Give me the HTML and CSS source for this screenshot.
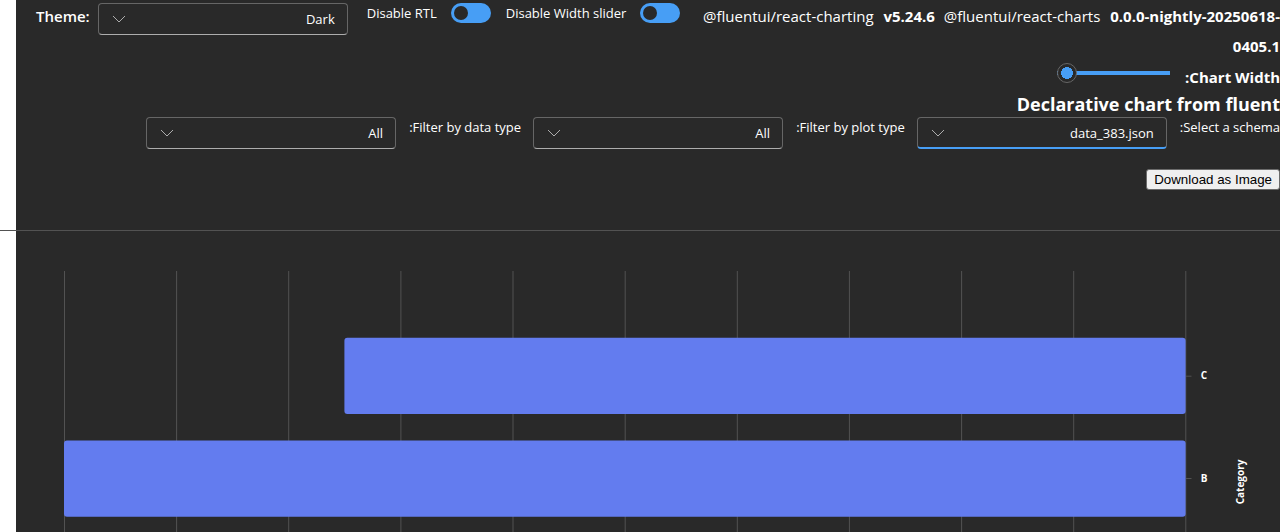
FILE: index.html
```html
<!DOCTYPE html>
<html lang="en" dir="rtl">
<head>
<meta charset="utf-8">
<title>Declarative chart</title>
<link rel="stylesheet" href="styles.css">
</head>
<body>
<main class="app">
  <header class="toolbar" dir="ltr">
    <div class="theme">
      <label class="strong" for="theme">Theme:</label>
      <div class="dropdown">
        <select id="theme" dir="rtl"><option>Dark</option></select>
        <svg class="chevron" viewBox="0 0 14 8"><path d="M1 1l6 6 6-6"/></svg>
      </div>
    </div>
    <div class="switch"><label for="rtl">Disable RTL</label><input id="rtl" type="checkbox" role="switch" checked></div>
    <div class="switch"><label for="slider">Disable Width slider</label><input id="slider" type="checkbox" role="switch" checked></div>
    <p class="versions"><span>@fluentui/react-charting</span> <b>v5.24.6</b> <span>@fluentui/react-charts</span> <b>0.0.0-nightly-20250618-0405.1</b></p>
  </header>
  <div class="width-row">
    <label class="strong" for="width">Chart Width:</label>
    <input id="width" class="range" type="range" min="0" max="100" value="100">
  </div>
  <h1 class="title">Declarative chart from fluent</h1>
  <div class="filters">
    <div class="field">
      <label for="schema">Select a schema:</label>
      <div class="dropdown active">
        <select id="schema"><option>data_383.json</option></select>
        <svg class="chevron" viewBox="0 0 14 8"><path d="M1 1l6 6 6-6"/></svg>
      </div>
    </div>
    <div class="field">
      <label for="plot">Filter by plot type:</label>
      <div class="dropdown">
        <select id="plot"><option>All</option></select>
        <svg class="chevron" viewBox="0 0 14 8"><path d="M1 1l6 6 6-6"/></svg>
      </div>
    </div>
    <div class="field">
      <label for="data">Filter by data type:</label>
      <div class="dropdown">
        <select id="data"><option>All</option></select>
        <svg class="chevron" viewBox="0 0 14 8"><path d="M1 1l6 6 6-6"/></svg>
      </div>
    </div>
  </div>
  <button class="download" type="button">Download as Image</button>
  <hr class="divider">
  <svg class="chart" viewBox="0 0 1264 301" direction="ltr" role="img" aria-label="Bar chart by category">
    <path class="grid" d="M48.5 40V301M160.6 40V301M272.7 40V301M384.9 40V301M497 40V301M609.2 40V301M721.3 40V301M833.4 40V301M945.6 40V301M1057.7 40V301M1169.8 40V301M1170 145.2h5.500M1170 247.500h5.500"/>
    <rect class="bar" x="328.400" y="106.800" width="841.200" height="76.200" rx="3"/>
    <rect class="bar" x="48" y="209.500" width="1121.600" height="76.200" rx="3"/>
    <text class="tick" x="1188" y="148" text-anchor="middle">C</text>
    <text class="tick" x="1188" y="251" text-anchor="middle">B</text>
    <text class="axis-title" transform="translate(1228 251) rotate(-90)" text-anchor="middle">Category</text>
  </svg>
</main>
</body>
</html>
```
FILE: styles.css
```css
* { box-sizing: border-box; }
body {
  margin: 0;
  background: #fff;
  font-family: "Open Sans", "Noto Sans", sans-serif;
  font-size: 13px;
  line-height: 20px;
  color: #fff;
}
.app {
  margin-left: 16px;
  background: #292929;
}
.toolbar {
  display: flex;
  align-items: flex-start;
  padding: 1px 0 0 20px;
}
.theme {
  display: flex;
  gap: 8px;
  margin: 2px 19px 0 0;
}
.strong {
  font-size: 15px;
  font-weight: 600;
}
.theme .strong { padding-top: 3px; }
.width-row .strong { font-weight: 700; }
.dropdown {
  display: grid;
  width: 250px;
  flex: none;
}
.dropdown select {
  grid-area: 1 / 1;
  appearance: none;
  height: 32px;
  width: 100%;
  padding: 0 12px;
  border: 1px solid #666;
  border-bottom-color: #adadad;
  border-radius: 4px;
  background: transparent;
  color: #fff;
  font: inherit;
}
.dropdown.active select { border-bottom: 2px solid #479ef5; }
.chevron {
  grid-area: 1 / 1;
  justify-self: end;
  align-self: center;
  width: 14px;
  height: 8px;
  margin-left: 14px;
  fill: none;
  stroke: #adadad;
  pointer-events: none;
}
.toolbar .chevron { justify-self: start; }
.switch {
  display: flex;
  align-items: center;
  flex: none;
  gap: 14px;
  margin: 2px 15px 0 0;
}
.switch input {
  appearance: none;
  display: flex;
  align-items: center;
  width: 40px;
  height: 20px;
  margin: 0;
  padding: 0 3px;
  border-radius: 10px;
  background: #479ef5;
}
.switch input::before {
  content: "";
  width: 14px;
  height: 14px;
  border-radius: 50%;
  background: #292929;
}
.versions {
  flex: 1;
  margin: 0;
  font-size: 15px;
  line-height: 30px;
  text-align: right;
}
.versions b { font-weight: 700; margin: 0 5px 0 6px; }
.versions b:last-child { margin-right: 0; }
.width-row {
  display: flex;
  align-items: flex-start;
  gap: 15px;
  height: 31px;
}
.width-row .strong { padding-top: 6px; }
.range {
  appearance: none;
  width: 113px;
  height: 20px;
  margin: 2px 0 0;
  background: linear-gradient(#479ef5, #479ef5) center / 100% 4px no-repeat;
}
.range::-webkit-slider-thumb {
  appearance: none;
  width: 20px;
  height: 20px;
  border: 1px solid #666;
  border-radius: 50%;
  background: radial-gradient(circle, #479ef5 0 6px, #292929 6px);
}
.title {
  margin: 0;
  font-size: 18px;
  font-weight: 700;
  line-height: 25px;
}
.filters, .field { display: flex; }
.filters { gap: 12px; }
.field { gap: 13px; }
.download {
  display: block;
  height: 21px;
  margin: 20px 0 40px;
  padding: 1px 7px;
  border: 1px solid #6b6b6b;
  border-radius: 3px;
  background: #efefef;
  color: #000;
  font-family: "Liberation Sans", Arial, sans-serif;
}
.divider {
  height: 1px;
  margin: 0 0 0 -16px;
  border: 0;
  background: #525252;
}
.chart {
  display: block;
  width: 100%;
}
.grid { stroke: #525252; fill: none; }
.bar { fill: #637cef; }
.tick, .axis-title {
  fill: #fff;
  font-size: 10px;
  font-weight: 700;
}
```
